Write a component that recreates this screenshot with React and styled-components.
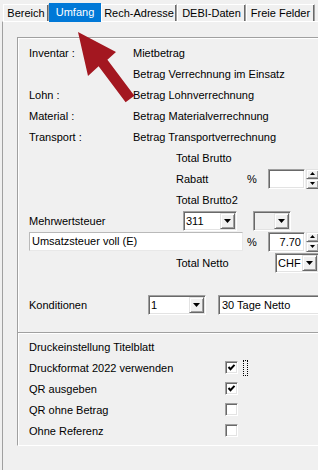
import React from 'react'
import styled, { createGlobalStyle } from 'styled-components'

const GlobalStyle = createGlobalStyle`
  body {
    margin: 0;
    background: #f0f0f0;
    font-family: "Liberation Sans", Arial, sans-serif;
    font-size: 11px;
    color: #000;
  }
`

const Window = styled.div`
  position: relative;
  width: 318px;
  height: 470px;
  overflow: hidden;
  background: #f0f0f0;
`

const TabStrip = styled.div`
  display: flex;
  align-items: flex-end;
  height: 21px;
  padding-left: 3px;
  box-sizing: border-box;
  position: relative;
  z-index: 2;
`

const Tab = styled.div`
  box-sizing: border-box;
  width: ${p => p.$w}px;
  flex-shrink: 0;
  text-align: center;
  white-space: nowrap;
  ${p => p.$active ? `
    height: 19px;
    margin-bottom: -1px;
    line-height: 18px;
    background: #0078d7;
    color: #fff;
  ` : `
    height: 17px;
    line-height: 15px;
    padding-top: 1px;
    background: #f0f0f0;
    border-top: 1px solid #fff;
    border-left: 1px solid #fff;
    border-right: 1px solid #a0a0a0;
    box-shadow: inset -1px 0 #696969;
  `}
`

const Panel = styled.div`
  margin-left: 2px;
  width: 340px;
  height: 449px;
  box-sizing: border-box;
  border-top: 1px solid #fff;
  border-left: 1px solid #a0a0a0;
  padding: 15px 0 0 14px;
`

const Group = styled.div`
  border-top: 1px solid #a0a0a0;
  border-left: 1px solid #a0a0a0;
  box-shadow: inset 1px 1px #fff;
  border-bottom: 1px solid #fff;
`

const Section = styled.div`
  padding: ${p => p.$pad};
  ${p => p.$divided && `
    border-top: 1px solid #a0a0a0;
    box-shadow: inset 0 1px #fff;
  `}
`

const Row = styled.div`
  display: flex;
  align-items: center;
  height: 21px;
  padding-left: 11px;
  white-space: nowrap;
`

const Label = styled.span`
  flex-shrink: 0;
  width: ${p => (p.$w ? `${p.$w}px` : 'auto')};
`

const sunken = `
  border: 1px solid;
  border-color: #a0a0a0 #fff #fff #a0a0a0;
  box-shadow: inset 1px 1px #696969, inset -1px -1px #e3e3e3;
`

const Combo = styled.div`
  flex-shrink: 0;
  box-sizing: border-box;
  display: flex;
  width: ${p => p.$w}px;
  height: 20px;
  padding: 1px;
  background: ${p => p.$bg || '#fff'};
  ${sunken}
`

const ComboValue = styled.span`
  flex: 1;
  min-width: 0;
  padding-left: 1px;
  line-height: 16px;
`

const raised = `
  background: #f0f0f0;
  border: 1px solid;
  border-color: #e3e3e3 #696969 #696969 #e3e3e3;
  box-shadow: inset 1px 1px #fff, inset -1px -1px #a0a0a0;
`

const DropButton = styled.span`
  box-sizing: border-box;
  flex-shrink: 0;
  width: 15px;
  display: flex;
  align-items: center;
  justify-content: center;
  ${raised}
`

const TextField = styled.div`
  flex-shrink: 0;
  box-sizing: border-box;
  width: ${p => p.$w}px;
  height: ${p => p.$h || 20}px;
  background: #fff;
  line-height: ${p => (p.$h || 20) - 4}px;
  padding: 1px 3px;
  text-align: ${p => p.$align || 'left'};
  overflow: hidden;
  ${p => p.$flat ? `
    border: 1px solid;
    border-color: #b9b9b9 #e8e8e8 #e8e8e8 #b9b9b9;
    padding: 0 2px;
    line-height: 17px;
  ` : sunken}
`

const Spinner = styled.div`
  flex-shrink: 0;
  display: flex;
  flex-direction: column;
  width: 13px;
  height: 20px;
  margin-left: 1px;
`

const SpinButton = styled.span`
  box-sizing: border-box;
  flex: 1;
  display: flex;
  align-items: center;
  justify-content: center;
  ${raised}
`

const Check = styled.span`
  flex-shrink: 0;
  box-sizing: border-box;
  width: 13px;
  height: 13px;
  background: #fff;
  display: flex;
  align-items: center;
  justify-content: center;
  ${sunken}
`

const FocusMark = styled.span`
  box-sizing: border-box;
  width: 5px;
  height: 16px;
  margin-left: 5px;
  border: 1px dotted #000;
`

const Overlay = styled.svg`
  position: absolute;
  left: 0;
  top: 0;
  pointer-events: none;
  z-index: 3;
`

const Triangle = ({ up, w = 7, h = 4 }) => (
  <svg width={w} height={h} viewBox={`0 0 ${w} ${h}`}>
    <polygon points={up ? `0,${h} ${w},${h} ${w / 2},0` : `0,0 ${w},0 ${w / 2},${h}`} fill="#000" />
  </svg>
)

const Dropdown = ({ value, w, bg }) => (
  <Combo $w={w} $bg={bg}>
    <ComboValue>{value}</ComboValue>
    <DropButton><Triangle /></DropButton>
  </Combo>
)

const Spin = () => (
  <Spinner>
    <SpinButton><Triangle up w={5} h={3} /></SpinButton>
    <SpinButton><Triangle w={5} h={3} /></SpinButton>
  </Spinner>
)

const CheckBox = ({ checked }) => (
  <Check>
    {checked && (
      <svg width="9" height="9" viewBox="0 0 9 9">
        <polyline points="1.5,4 3.5,6.2 7.5,1.8" fill="none" stroke="#000" strokeWidth="2" />
      </svg>
    )}
  </Check>
)

const tabs = [
  { name: 'Bereich', w: 46 },
  { name: 'Umfang', w: 52, active: true },
  { name: 'Rech-Adresse', w: 76 },
  { name: 'DEBI-Daten', w: 69 },
  { name: 'Freie Felder', w: 69 },
]

const amounts = [
  ['Inventar :', 'Mietbetrag'],
  ['', 'Betrag Verrechnung im Einsatz'],
  ['Lohn :', 'Betrag Lohnverrechnung'],
  ['Material :', 'Betrag Materialverrechnung'],
  ['Transport :', 'Betrag Transportverrechnung'],
]

const printOptions = [
  ['Druckformat 2022 verwenden', true, true],
  ['QR ausgeben', true],
  ['QR ohne Betrag', false],
  ['Ohne Referenz', false],
]

export default function App() {
  return (
    <Window>
      <GlobalStyle />
      <TabStrip>
        {tabs.map(t => (
          <Tab key={t.name} $w={t.w} $active={t.active}>{t.name}</Tab>
        ))}
      </TabStrip>
      <Panel>
        <Group>
          <Section $pad="4px 0 17px 0">
            {amounts.map(([label, text]) => (
              <Row key={text}>
                <Label $w={104}>{label}</Label>
                <Label>{text}</Label>
              </Row>
            ))}
            <Row>
              <Label $w={147} />
              <Label>Total Brutto</Label>
            </Row>
            <Row>
              <Label $w={147} />
              <Label $w={71}>Rabatt</Label>
              <Label $w={21}>%</Label>
              <TextField $w={37} />
              <Spin />
            </Row>
            <Row>
              <Label $w={147} />
              <Label>Total Brutto2</Label>
            </Row>
            <Row>
              <Label $w={154}>Mehrwertsteuer</Label>
              <Dropdown value="311" w={54} />
              <Label $w={16} />
              <Dropdown value="" w={38} bg="#f0f0f0" />
            </Row>
            <Row>
              <TextField $w={214} $h={19} $flat>Umsatzsteuer voll (E)</TextField>
              <Label $w={4} />
              <Label $w={21}>%</Label>
              <TextField $w={37} $align="right">7.70</TextField>
              <Spin />
            </Row>
            <Row>
              <Label $w={147} />
              <Label $w={99}>Total Netto</Label>
              <Dropdown value="CHF" w={44} />
            </Row>
            <Row />
            <Row>
              <Label $w={119}>Konditionen</Label>
              <Dropdown value="1" w={58} />
              <Label $w={12} />
              <TextField $w={120}>30 Tage Netto</TextField>
            </Row>
          </Section>
          <Section $divided $pad="3px 0 4px 0">
            <Row>
              <Label>Druckeinstellung Titelblatt</Label>
            </Row>
            {printOptions.map(([label, checked, focused]) => (
              <Row key={label}>
                <Label $w={196}>{label}</Label>
                <CheckBox checked={checked} />
                {focused && <FocusMark />}
              </Row>
            ))}
          </Section>
        </Group>
      </Panel>
      <Overlay width="318" height="470" viewBox="0 0 318 470">
        <polygon
          points="78,32 116,52 107.4,59.7 134.4,95.7 125.6,102.3 98.6,66.3 88,76"
          fill="#a31720"
        />
      </Overlay>
    </Window>
  )
}
